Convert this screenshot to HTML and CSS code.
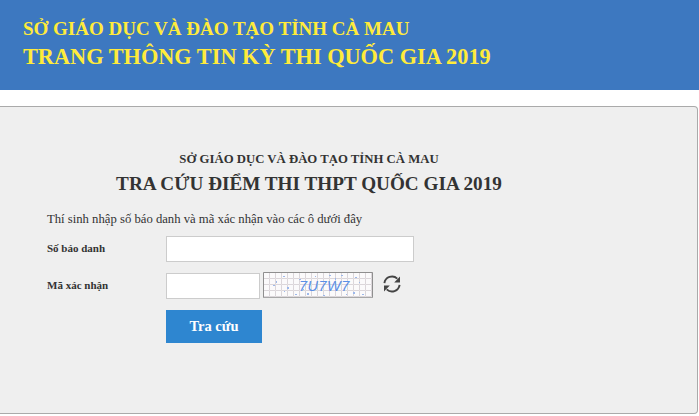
FILE: index.html
```html
<!DOCTYPE html>
<html lang="vi">
<head>
  <meta charset="UTF-8">
  <meta name="viewport" content="width=device-width, initial-scale=1.0">
  <title>Tra cứu điểm thi</title>
  <link rel="stylesheet" href="styles.css">
</head>
<body>
  <div class="site-header">
    <div class="site-header-sub">SỞ GIÁO DỤC VÀ ĐÀO TẠO TỈNH CÀ MAU</div>
    <div class="site-header-main">TRANG THÔNG TIN KỲ THI QUỐC GIA 2019</div>
  </div>

  <div class="panel">
    <div class="panel-heading">
      <div class="panel-sub">SỞ GIÁO DỤC VÀ ĐÀO TẠO TỈNH CÀ MAU</div>
      <div class="panel-title">TRA CỨU ĐIỂM THI THPT QUỐC GIA 2019</div>
    </div>
    <p class="intro">Thí sinh nhập số báo danh và mã xác nhận vào các ô dưới đây</p>

    <div class="form-row">
      <label class="form-label" for="soBaoDanh">Số báo danh</label>
      <input class="form-input" type="text" id="soBaoDanh">
    </div>
    <div class="form-row form-row-captcha">
      <label class="form-label" for="maXacNhan">Mã xác nhận</label>
      <input class="form-input form-input-small" type="text" id="maXacNhan">
      <svg class="captcha" width="110" height="26" viewBox="0 0 110 26">
        <defs>
          <pattern id="captchaGrid" width="6" height="6" patternUnits="userSpaceOnUse">
            <path d="M6 0.5H0.5V6" fill="none" stroke="#dbd6da" stroke-width="1"/>
          </pattern>
        </defs>
        <rect width="110" height="26" fill="#fbfafb"/>
        <rect width="110" height="26" fill="url(#captchaGrid)"/>
        <g fill="#9db8ea">
          <rect x="10" y="13" width="2" height="1"/><rect x="13" y="9" width="1" height="2"/>
          <rect x="20" y="4" width="2" height="1"/><rect x="21" y="19" width="1" height="1"/>
          <rect x="24" y="15" width="2" height="2"/><rect x="32" y="22" width="2" height="1"/>
          <rect x="40" y="17" width="1" height="1"/><rect x="36" y="7" width="2" height="1"/>
          <rect x="44" y="21" width="2" height="2"/><rect x="60" y="23" width="2" height="1"/>
          <rect x="72" y="6" width="1" height="2"/><rect x="78" y="3" width="2" height="1"/>
          <rect x="84" y="12" width="1" height="1"/><rect x="92" y="5" width="2" height="1"/>
          <rect x="90" y="20" width="2" height="2"/><rect x="96" y="10" width="1" height="1"/>
          <rect x="99" y="22" width="2" height="1"/><rect x="83" y="22" width="1" height="1"/>
          <rect x="52" y="4" width="1" height="1"/><rect x="66" y="3" width="2" height="1"/>
        </g>
        <text class="captcha-text" x="36" y="19">7U7W7</text>
        <path d="M0.5 26V0.5H109.5V26" fill="none" stroke="#8f8f8f" stroke-width="1"/>
        <path d="M0 25.5H110" fill="none" stroke="#a8a8a8" stroke-width="1"/>
      </svg>
      <svg class="refresh" width="18" height="18" viewBox="0 0 18 18">
        <path d="M1.4 8.2A7.7 7.7 0 0 1 14.3 3.6" fill="none" stroke="#444" stroke-width="1.9"/>
        <path d="M17 1.6V7.4H11.2Z" fill="#444"/>
        <path d="M16.6 9.8A7.7 7.7 0 0 1 3.7 14.4" fill="none" stroke="#444" stroke-width="1.9"/>
        <path d="M1 16.4V10.6H6.8Z" fill="#444"/>
      </svg>
    </div>
    <div class="form-actions">
      <button class="btn-search" type="button">Tra cứu</button>
    </div>
  </div>
</body>
</html>
```

FILE: styles.css
```css
body {
  margin: 0;
  font-family: "Liberation Serif", "Times New Roman", serif;
  background-color: #fff;
  color: #333;
}

.site-header {
  height: 90px;
  box-sizing: border-box;
  padding: 17px 0 0 23px;
  background-color: #3d78c0;
  color: #ffeb3b;
  font-weight: bold;
}

.site-header-sub {
  font-size: 19px;
  line-height: 24px;
}

.site-header-main {
  font-size: 22.3px;
  line-height: 32px;
}

.panel {
  width: 698px;
  height: 308px;
  box-sizing: border-box;
  margin-top: 16px;
  padding: 43px 0 0 47px;
  background-color: #efefef;
  border: 1px solid #aaa;
  border-left: none;
  border-radius: 0 4px 4px 0;
}

.panel-heading {
  width: 524px;
  text-align: center;
  font-weight: bold;
}

.panel-sub {
  font-size: 12.75px;
  line-height: 18px;
}

.panel-title {
  font-size: 19.2px;
  line-height: 32px;
}

.intro {
  margin: 9px 0 0 0;
  font-size: 12.7px;
  line-height: 20px;
}

.form-row {
  display: flex;
  align-items: center;
  height: 26px;
  margin-top: 7px;
}

.form-row-captcha {
  margin-top: 11px;
}

.form-label {
  width: 119px;
  flex: none;
  margin-top: -2px;
  font-size: 11px;
  font-weight: bold;
}

.form-input {
  width: 248px;
  height: 26px;
  box-sizing: border-box;
  padding: 0 6px;
  background-color: #fff;
  border: 1px solid #ccc;
  outline: none;
}

.form-input-small {
  width: 94px;
}

.captcha {
  margin: -2px 0 0 3px;
  flex: none;
}

.captcha-text {
  font-family: "Liberation Sans", Arial, sans-serif;
  font-size: 14.5px;
  font-style: italic;
  letter-spacing: 0.5px;
  fill: #5b8fe6;
}

.refresh {
  margin: -4px 0 0 10px;
  flex: none;
}

.form-actions {
  margin: 11px 0 0 119px;
}

.btn-search {
  width: 96px;
  height: 33px;
  padding: 0;
  background-color: #2e86d0;
  color: #fff;
  border: none;
  font-family: inherit;
  font-size: 14.5px;
  font-weight: bold;
  cursor: pointer;
}
```
